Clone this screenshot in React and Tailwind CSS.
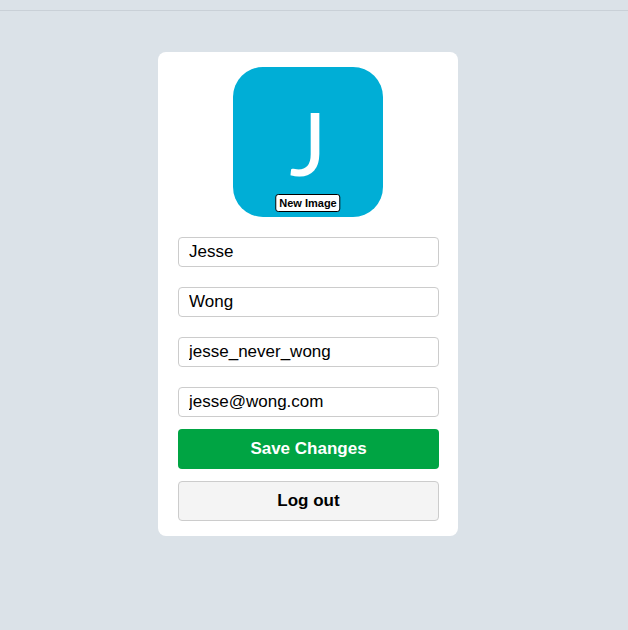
export default function App() {
  const inputCls =
    "w-full h-[30px] border border-[#cccccc] rounded-[4px] px-[10px] text-[17px] text-black bg-white outline-none";
  return (
    <div className="min-h-[630px] w-full bg-[#dbe2e8]" style={{ fontFamily: '"Liberation Sans", Arial, sans-serif' }}>
      <div className="h-[11px] border-b border-[#c9d0d7]" />
      <div className="flex justify-center pt-[41px] pr-[12px]">
        <div className="w-[300px] bg-white rounded-[8px] pl-[20px] pr-[19px] pt-[15px] pb-[15px] flex flex-col">
          <div className="flex justify-center pr-[1px]">
            <div className="relative w-[150px] h-[150px] rounded-[30px] bg-[#00aed6] flex items-center justify-center">
              <span
                className="text-white text-[88px] font-normal leading-none"
                style={{ fontFamily: 'Lato, "Open Sans", sans-serif' }}
              >
                J
              </span>
              <button className="absolute left-1/2 -translate-x-1/2 bottom-[5px] h-[18px] px-[3px] bg-white border border-black rounded-[3px] text-[11px] font-bold text-black leading-none">
                New Image
              </button>
            </div>
          </div>
          <div className="flex flex-col gap-[20px] mt-[20px]">
            <input className={inputCls} defaultValue="Jesse" />
            <input className={inputCls} defaultValue="Wong" />
            <input className={inputCls} defaultValue="jesse_never_wong" />
            <input className={inputCls} defaultValue="jesse@wong.com" />
          </div>
          <button className="mt-[12px] h-[40px] w-full rounded-[4px] bg-[#00a443] text-white font-bold text-[17px]">
            Save Changes
          </button>
          <button className="mt-[12px] h-[40px] w-full rounded-[4px] bg-[#f4f4f4] border border-[#cccccc] text-black font-bold text-[17px]">
            Log out
          </button>
        </div>
      </div>
    </div>
  );
}
